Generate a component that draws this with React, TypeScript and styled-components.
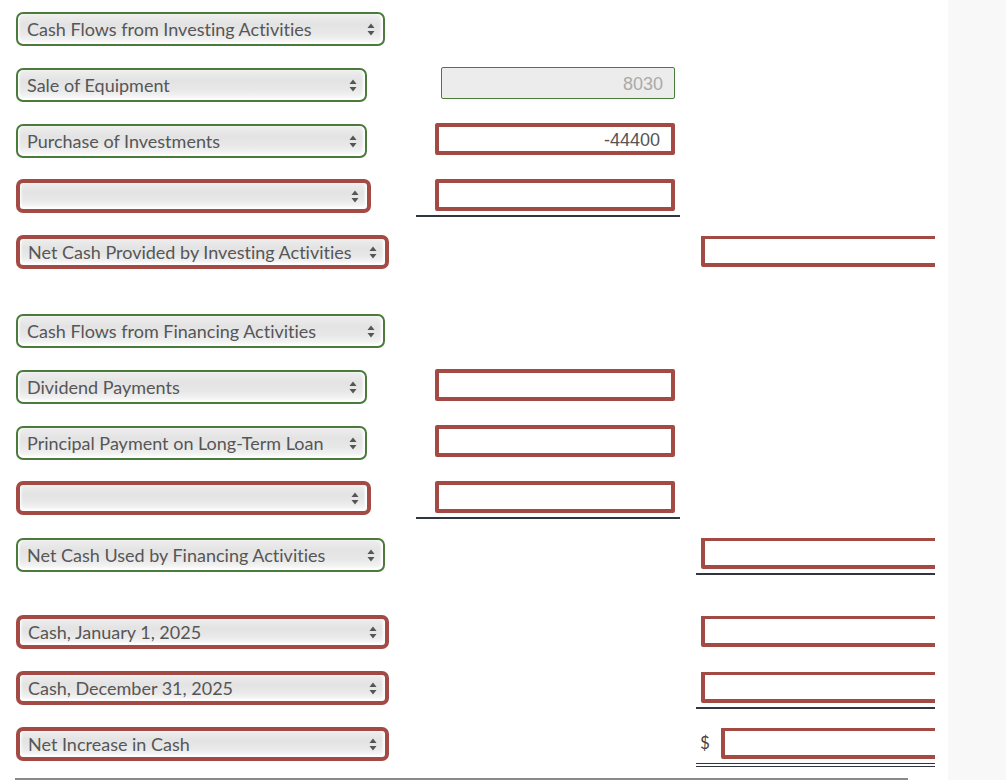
import styled, { createGlobalStyle } from 'styled-components';

type Tone = 'ok' | 'bad';

interface Amount {
  value?: string;
  locked?: boolean;
  tone: Tone;
}

interface Line {
  label?: string;
  tone?: Tone;
  wide?: boolean;
  mid?: Amount;
  midRule?: boolean;
  total?: Amount;
  totalRule?: 'single' | 'double';
  dollar?: boolean;
  spacer?: boolean;
}

const lines: Line[] = [
  { label: 'Cash Flows from Investing Activities', tone: 'ok', wide: true },
  { label: 'Sale of Equipment', tone: 'ok', mid: { value: '8030', locked: true, tone: 'ok' } },
  { label: 'Purchase of Investments', tone: 'ok', mid: { value: '-44400', tone: 'bad' } },
  { label: '', tone: 'bad', mid: { tone: 'bad' }, midRule: true },
  { label: 'Net Cash Provided by Investing Activities', tone: 'bad', wide: true, total: { tone: 'bad' } },
  { spacer: true },
  { label: 'Cash Flows from Financing Activities', tone: 'ok', wide: true },
  { label: 'Dividend Payments', tone: 'ok', mid: { tone: 'bad' } },
  { label: 'Principal Payment on Long-Term Loan', tone: 'ok', mid: { tone: 'bad' } },
  { label: '', tone: 'bad', mid: { tone: 'bad' }, midRule: true },
  { label: 'Net Cash Used by Financing Activities', tone: 'ok', wide: true, total: { tone: 'bad' }, totalRule: 'single' },
  { spacer: true },
  { label: 'Cash, January 1, 2025', tone: 'bad', wide: true, total: { tone: 'bad' } },
  { label: 'Cash, December 31, 2025', tone: 'bad', wide: true, total: { tone: 'bad' }, totalRule: 'single' },
  { label: 'Net Increase in Cash', tone: 'bad', wide: true, total: { tone: 'bad' }, totalRule: 'double', dollar: true }
];

const GREEN = '#4b7a3d';
const RED = '#a34a45';
const RULE = '#2f3640';

const GlobalStyle = createGlobalStyle`
  html, body {
    margin: 0;
    padding: 0;
    background: #ffffff;
    overflow: hidden;
  }
  body {
    font-family: Lato, "Open Sans", sans-serif;
  }
`;

const App = (): JSX.Element => {
  return (
    <>
      <GlobalStyle />
      <StyledPage>
        <StyledSheet>
          {lines.map((line, i) =>
            line.spacer ? (
              <StyledSpacer key={i} />
            ) : (
              <StyledRow key={i}>
                <StyledSelectWrap>
                  <StyledSelect $tone={line.tone!} $wide={!!line.wide} defaultValue={line.label}>
                    <option value={line.label}>{line.label}</option>
                  </StyledSelect>
                  <StyledArrows $tone={line.tone!} width="8" height="13" viewBox="0 0 8 13">
                    <path d="M4 0.5 L7.5 5 H0.5 Z" fill="#555" />
                    <path d="M4 12.5 L7.5 8 H0.5 Z" fill="#555" />
                  </StyledArrows>
                </StyledSelectWrap>
                <StyledMidCell $rule={!!line.midRule}>
                  {line.mid && (
                    <StyledAmount
                      $tone={line.mid.tone}
                      $locked={!!line.mid.locked}
                      readOnly={line.mid.locked}
                      defaultValue={line.mid.value ?? ''}
                    />
                  )}
                </StyledMidCell>
                <div />
                <StyledTotalCell $rule={line.totalRule}>
                  {line.dollar && <StyledDollar>$</StyledDollar>}
                  {line.total && <StyledTotalInput $tone={line.total.tone} defaultValue="" />}
                </StyledTotalCell>
              </StyledRow>
            )
          )}
          <StyledScrollThumb />
        </StyledSheet>
        <StyledSide />
      </StyledPage>
    </>
  );
};

export default App;

const StyledPage = styled.div`
  display: flex;
  width: 1006px;
  height: 780px;
`;

const StyledSheet = styled.div`
  position: relative;
  width: 948px;
  padding: 12px 0 0 16px;
  box-sizing: border-box;
  background: #ffffff;
`;

const StyledSide = styled.div`
  flex: 1;
  background: #f8f8f8;
`;

const StyledRow = styled.div`
  display: grid;
  grid-template-columns: 400px 264px 16px 239px;
  align-items: start;
  height: 56px;
`;

const StyledSpacer = styled.div`
  height: 22px;
`;

const StyledSelectWrap = styled.div`
  position: relative;
  justify-self: start;
`;

const StyledSelect = styled.select<{ $tone: Tone; $wide: boolean }>`
  appearance: none;
  -webkit-appearance: none;
  box-sizing: border-box;
  display: block;
  height: 34px;
  width: ${(p) => (p.$wide ? 365 : 347) + (p.$tone === 'bad' ? 8 : 4)}px;
  margin-top: ${(p) => (p.$tone === 'bad' ? '-1px' : '0')};
  padding: 0 24px 0 ${(p) => (p.$tone === 'bad' ? 8 : 9)}px;
  border: ${(p) => (p.$tone === 'bad' ? `4px solid ${RED}` : `2px solid ${GREEN}`)};
  border-radius: 7px;
  background: linear-gradient(to bottom, #eeeeee 0%, #e3e3e3 35%, #e8e8e8 65%, #f9f9f9 100%);
  box-shadow: inset 2px 0 3px -1px #ffffff, inset -3px 0 3px -1px #ffffff, inset 0 -2px 3px #ffffff;
  font-family: Lato, "Open Sans", sans-serif;
  font-size: 18px;
  font-variant-ligatures: none;
  color: #565656;
  outline: none;
`;

const StyledArrows = styled.svg<{ $tone: Tone }>`
  position: absolute;
  top: ${(p) => (p.$tone === 'bad' ? 10 : 11)}px;
  right: ${(p) => (p.$tone === 'bad' ? 12 : 10)}px;
  pointer-events: none;
`;

const StyledMidCell = styled.div<{ $rule: boolean }>`
  display: flex;
  justify-content: flex-end;
  align-items: flex-start;
  box-sizing: border-box;
  height: 37px;
  padding-right: 5px;
  border-bottom: 2px solid ${(p) => (p.$rule ? RULE : 'transparent')};
`;

const StyledAmount = styled.input<{ $tone: Tone; $locked: boolean }>`
  box-sizing: border-box;
  width: ${(p) => (p.$tone === 'bad' ? 240 : 234)}px;
  height: 32px;
  margin-top: -1px;
  padding: 2px 11px 0 6px;
  border: ${(p) => (p.$tone === 'bad' ? `4px solid ${RED}` : `1px solid ${GREEN}`)};
  border-radius: 2px;
  background: ${(p) => (p.$locked ? '#ececec' : '#ffffff')};
  color: ${(p) => (p.$locked ? '#aaaaaa' : '#555555')};
  font-family: "Liberation Sans", Arial, sans-serif;
  font-size: 18px;
  text-align: right;
  outline: none;
`;

const StyledTotalCell = styled.div<{ $rule?: 'single' | 'double' }>`
  display: flex;
  align-items: flex-start;
  overflow: hidden;
  box-sizing: border-box;
  height: ${(p) => (p.$rule === 'double' ? 39 : p.$rule === 'single' ? 37 : 34)}px;
  padding-left: ${(p) => (p.$rule === 'double' ? 4 : 5)}px;
  border-bottom: ${(p) =>
    p.$rule === 'double' ? `4px double ${RULE}` : p.$rule === 'single' ? `2px solid ${RULE}` : 'none'};
`;

const StyledDollar = styled.span`
  flex: none;
  width: 21px;
  margin-top: 4px;
  font-family: Lato, "Open Sans", sans-serif;
  font-size: 17px;
  color: #444444;
`;

const StyledTotalInput = styled.input<{ $tone: Tone }>`
  flex: none;
  box-sizing: border-box;
  width: 300px;
  height: 32px;
  margin-top: -1px;
  border: 4px solid ${RED};
  border-radius: 2px;
  background: #ffffff;
  outline: none;
`;

const StyledScrollThumb = styled.div`
  position: absolute;
  left: 15px;
  bottom: 0;
  width: 893px;
  height: 2px;
  background: #8a8a8a;
`;
